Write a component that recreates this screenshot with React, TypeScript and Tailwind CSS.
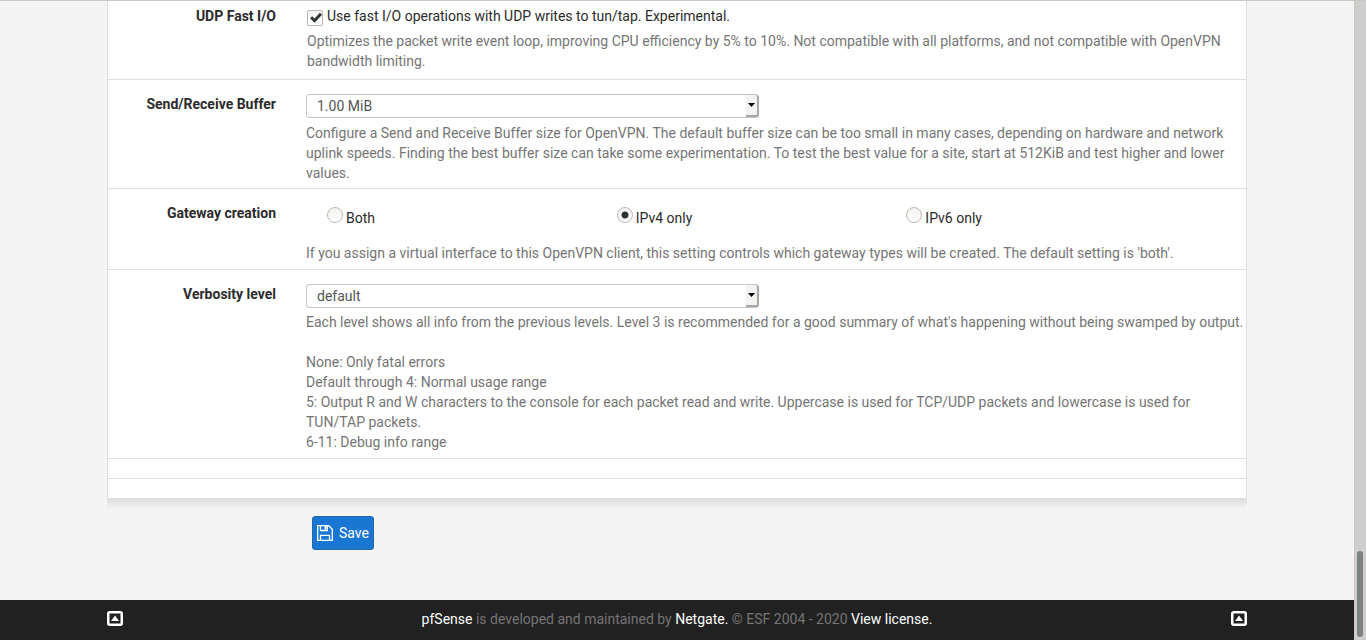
import type { ReactNode } from "react";

type RowProps = { label: string; htmlFor?: string; className: string; children: ReactNode };

function Row({ label, htmlFor, className, children }: RowProps) {
  return (
    <div className={`flex border-b border-[#dedede] ${className}`}>
      <div className="w-[168px] shrink-0 text-right font-bold text-[#2b2b2b]">
        {htmlFor ? <label htmlFor={htmlFor}>{label}</label> : <span id="gateway-label">{label}</span>}
      </div>
      <div className="ml-[30px] min-w-0 flex-1">{children}</div>
    </div>
  );
}

function Select({ id, options }: { id: string; options: string[] }) {
  return (
    <div className="relative w-[453px] max-w-full">
      <select
        id={id}
        className="block h-6 w-full appearance-none rounded-[3px] border border-[#c4c4c4] bg-white pl-[10px] pr-4 text-[14px] leading-5 text-[#555]"
      >
        {options.map((o) => (
          <option key={o}>{o}</option>
        ))}
      </select>
      <span className="pointer-events-none absolute inset-y-px right-0 flex w-[13px] items-center justify-center rounded-r-[3px] border-b-2 border-r-2 border-[#a9a8a6] bg-[#f4f3f2]">
        <svg width="7" height="4" viewBox="0 0 7 4" aria-hidden="true">
          <path d="M0 0h7L3.500 4z" fill="#000" />
        </svg>
      </span>
    </div>
  );
}

function Radio({ label, checked }: { label: string; checked?: boolean }) {
  return (
    <label className="flex gap-[3px] text-[#2b2b2b]">
      <input
        type="radio"
        name="gateway"
        defaultChecked={checked}
        className="size-4 appearance-none rounded-full border border-[#bdb7b1] bg-[linear-gradient(#f3f2f1,#ffffff)] checked:bg-[radial-gradient(circle,#2e3436_3px,transparent_4px),linear-gradient(#f3f2f1,#ffffff)]"
      />
      <span className="pt-px">{label}</span>
    </label>
  );
}

function ToTop() {
  return (
    <a href="#top" aria-label="Back to top" className="block">
      <svg width="16" height="15" viewBox="0 0 16 15" aria-hidden="true">
        <rect x="1.250" y="1.250" width="13.500" height="12.500" rx="1.500" fill="none" stroke="#fff" strokeWidth="2.500" />
        <path d="M4 10 8 4.500l4 5.500z" fill="#fff" />
      </svg>
    </a>
  );
}

export default function App() {
  return (
    <div id="top" className="flex min-h-screen bg-[#f4f4f4] font-[Roboto,sans-serif] text-[14px] leading-5 text-[#757575]">
      <div className="flex min-w-0 flex-1 flex-col border-t border-[#cdc7c2]">
        <main className="mx-auto w-full max-w-[1140px] flex-1">
          <form onSubmit={(e) => e.preventDefault()}>
            <div className="border-x border-[#dedede] bg-white">
              <Row label="UDP Fast I/O" htmlFor="udp" className="pb-2 pt-[5px]">
                <div className="pl-px">
                  <label className="flex gap-1 text-[#2b2b2b]">
                    <span className="relative mt-1 size-4">
                      <input
                        id="udp"
                        type="checkbox"
                        defaultChecked
                        className="peer block size-4 appearance-none rounded-[2px] border border-[#bdb7b1] bg-[linear-gradient(#f3f2f1,#ffffff)]"
                      />
                      <svg className="pointer-events-none absolute inset-0 hidden peer-checked:block" width="16" height="16" viewBox="0 0 16 16" aria-hidden="true">
                        <path d="M3 8.200 5.200 6.200 7.500 8.500 13 2.800 15 4.800 7.700 12.800z" fill="#2e3436" />
                      </svg>
                    </span>
                    Use fast I/O operations with UDP writes to tun/tap. Experimental.
                  </label>
                  <p className="mt-[5px] pr-4">
                    Optimizes the packet write event loop, improving CPU efficiency by 5% to 10%. Not compatible with all platforms, and not compatible with OpenVPN bandwidth limiting.
                  </p>
                </div>
              </Row>
              <Row label="Send/Receive Buffer" htmlFor="buffer" className="pb-[5px] pt-[14px]">
                <Select id="buffer" options={["1.00 MiB", "512 KiB", "2.00 MiB"]} />
                <p className="mt-[5px] pr-4">
                  Configure a Send and Receive Buffer size for OpenVPN. The default buffer size can be too small in many cases, depending on hardware and network uplink speeds. Finding the best buffer size can take some experimentation. To test the best value for a site, start at 512KiB and test higher and lower values.
                </p>
              </Row>
              <Row label="Gateway creation" className="pb-[6px] pt-[14px]">
                <div role="radiogroup" aria-labelledby="gateway-label" className="mt-1 grid max-w-[890px] grid-cols-3 pl-[21px]">
                  <Radio label="Both" />
                  <Radio label="IPv4 only" checked />
                  <Radio label="IPv6 only" />
                </div>
                <p className="mt-[15px]">
                  If you assign a virtual interface to this OpenVPN client, this setting controls which gateway types will be created. The default setting is 'both'.
                </p>
              </Row>
              <Row label="Verbosity level" htmlFor="verbosity" className="pb-[6px] pt-[14px]">
                <Select id="verbosity" options={["default", "none", "3 (recommended)", "4", "5"]} />
                <p className="mt-1">
                  Each level shows all info from the previous levels. Level 3 is recommended for a good summary of what's happening without being swamped by output.
                  <br />
                  <br />
                  None: Only fatal errors
                  <br />
                  Default through 4: Normal usage range
                  <br />
                  5: Output R and W characters to the console for each packet read and write. Uppercase is used for TCP/UDP packets and lowercase is used for TUN/TAP packets.
                  <br />
                  6-11: Debug info range
                </p>
              </Row>
              <div className="h-5 border-b border-[#dedede]" />
              <div className="h-5 border-b border-[#dedede]" />
            </div>
            <div className="h-[10px] bg-[linear-gradient(#dedede,#f4f4f4)]" />
            <button
              type="submit"
              className="mb-[50px] ml-[205px] mt-[7px] flex h-[34px] items-center gap-[6px] rounded-[3px] border border-[#2268a8] bg-[#1976d2] px-1 pb-px text-white"
            >
              <svg width="16" height="16" viewBox="0 0 16 16" fill="none" stroke="#fff" strokeWidth="1.300" aria-hidden="true">
                <path d="M.7.7h11l3.600 3.600v11H.7zM3.500 15.300v-5h9v5M3.500.7v4.800h6.800V.7" />
                <path d="M7.500 1h2v3.500h-2z" fill="#fff" stroke="none" />
              </svg>
              Save
            </button>
          </form>
        </main>
        <footer className="bg-[#212121]">
          <div className="mx-auto flex h-10 max-w-[1140px] items-center justify-between pb-[3px]">
            <ToTop />
            <p>
              <a href="#pfsense" className="text-white">pfSense</a> is developed and maintained by{" "}
              <a href="#netgate" className="text-white">Netgate.</a> © ESF 2004 - 2020{" "}
              <a href="#license" className="text-white">View license.</a>
            </p>
            <ToTop />
          </div>
        </footer>
      </div>
      <div className="flex w-3 shrink-0 flex-col justify-end border-l border-t border-[#cdc7c2] bg-[#cecece] pb-[3px] pl-[2px]" aria-hidden="true">
        <div className="h-[86px] w-[6px] rounded-full bg-[#7e8181]" />
      </div>
    </div>
  );
}
